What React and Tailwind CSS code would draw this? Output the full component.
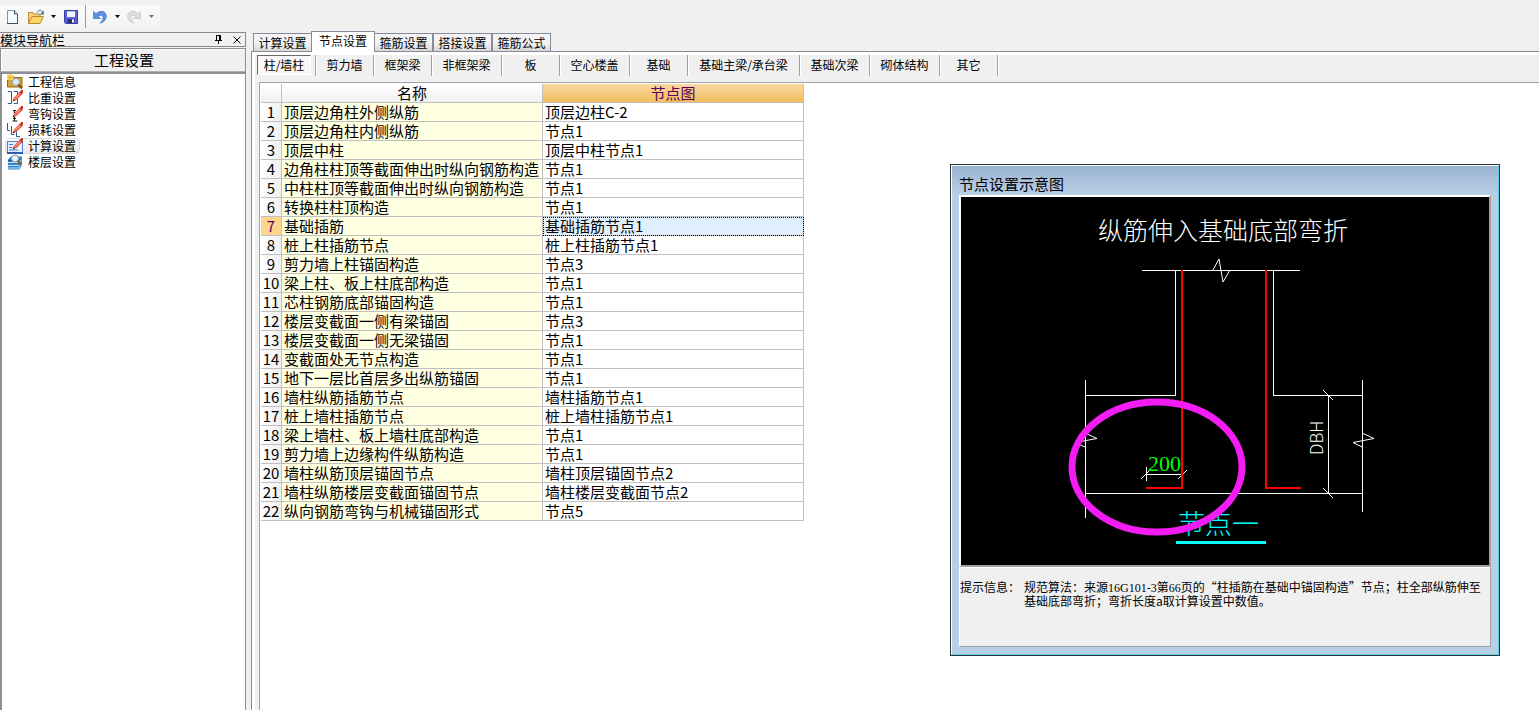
import React, { useState } from 'react';

const FONT = "font-['Noto_Sans_CJK_SC',sans-serif]";

const NAV_ITEMS = ['工程信息', '比重设置', '弯钩设置', '损耗设置', '计算设置', '楼层设置'];

const TABS = ['计算设置', '节点设置', '箍筋设置', '搭接设置', '箍筋公式'];

const MEMBERS = [
  { name: '柱/墙柱', width: 'w-[59px]' },
  { name: '剪力墙', width: 'w-[58px]' },
  { name: '框架梁', width: 'w-[58px]' },
  { name: '非框架梁', width: 'w-[70px]' },
  { name: '板', width: 'w-[58px]' },
  { name: '空心楼盖', width: 'w-[70px]' },
  { name: '基础', width: 'w-[58px]' },
  { name: '基础主梁/承台梁', width: 'w-[112px]' },
  { name: '基础次梁', width: 'w-[70px]' },
  { name: '砌体结构', width: 'w-[70px]' },
  { name: '其它', width: 'w-[58px]' },
];

const ROWS = [
  ['顶层边角柱外侧纵筋', '顶层边柱C-2'],
  ['顶层边角柱内侧纵筋', '节点1'],
  ['顶层中柱', '顶层中柱节点1'],
  ['边角柱柱顶等截面伸出时纵向钢筋构造', '节点1'],
  ['中柱柱顶等截面伸出时纵向钢筋构造', '节点1'],
  ['转换柱柱顶构造', '节点1'],
  ['基础插筋', '基础插筋节点1'],
  ['桩上柱插筋节点', '桩上柱插筋节点1'],
  ['剪力墙上柱锚固构造', '节点3'],
  ['梁上柱、板上柱底部构造', '节点1'],
  ['芯柱钢筋底部锚固构造', '节点1'],
  ['楼层变截面一侧有梁锚固', '节点3'],
  ['楼层变截面一侧无梁锚固', '节点1'],
  ['变截面处无节点构造', '节点1'],
  ['地下一层比首层多出纵筋锚固', '节点1'],
  ['墙柱纵筋插筋节点', '墙柱插筋节点1'],
  ['桩上墙柱插筋节点', '桩上墙柱插筋节点1'],
  ['梁上墙柱、板上墙柱底部构造', '节点1'],
  ['剪力墙上边缘构件纵筋构造', '节点1'],
  ['墙柱纵筋顶层锚固节点', '墙柱顶层锚固节点2'],
  ['墙柱纵筋楼层变截面锚固节点', '墙柱楼层变截面节点2'],
  ['纵向钢筋弯钩与机械锚固形式', '节点5'],
];

function Pencil() {
  return (
    <>
      <path d="M6 11 7 7.500 12.500 2 15 4.500 9.500 10Z" fill="#f0604a" />
      <path d="M12 2.500 14.500 0H16v2.500L14.500 5Z" fill="#c8321e" />
      <path d="M8 8.500 13.500 3" stroke="#ffb09c" />
      <path d="M5.500 11.500 6.500 9 8 10.500Z" fill="#3a2a1a" />
    </>
  );
}

function NavIcon({ index }) {
  const art = [
    <>
      <path d="M.5 2.500h6l1 1h7.500v9.500H.5z" fill="#d9a437" stroke="#8f6a1c" />
      <path d="M0 0h6v6H0z" fill="#fff0a0" />
      <path d="M3 0v7M0 3.500h7M.5 1l5 5M5.500 1l-5 5" stroke="#e6b818" />
      <circle cx="9" cy="8" r="3.500" fill="#d8ecff" stroke="#8fa2b8" />
      <path d="m11.500 10.500 3.500 4" stroke="#8a4a10" strokeWidth="2" />
    </>,
    <>
      <path d="M1 2V1.500h3.500v12H1V13M7 2V1.500h3.500v5M7 13v.5h3.500V9" fill="none" stroke="#2d5aa0" />
      <Pencil />
    </>,
    <>
      <path d="M6 4.500h3M7.500 4.500V15M5.500 15h5M6 12.500h3" stroke="#1a1a1a" fill="none" />
      <Pencil />
    </>,
    <>
      <path d="M.5 1v7.500H3M4.500 4v8.500H7.500M9.500 8v6.500H13" fill="none" stroke="#2d5aa0" />
      <Pencil />
    </>,
    <>
      <rect x=".5" y="3.500" width="15" height="11" fill="#e3efff" stroke="#5583cc" />
      <path d="M0 15h16" stroke="#2d5cae" strokeWidth="2" />
      <path d="M2 6.500h4M2 9.500h3M2 12h9" stroke="#3f78d8" />
      <Pencil />
    </>,
    <>
      <path d="M1 5.500 4 2.500h11v9.500l-3 3.500H1z" fill="#2d83c6" />
      <path d="M0 8.500h12l3-3M0 11.500h12l3-3M0 14h12l3-3" fill="none" stroke="#c5e6fc" />
      <path d="M1 6.500h5" stroke="#1c5c98" />
      <circle cx="8" cy="4.500" r="3.500" fill="#e9f2fb" stroke="#8797a8" />
      <path d="m10.500 7 4 3.500" stroke="#8a5a2a" strokeWidth="2" />
    </>,
  ];
  return (
    <svg viewBox="0 0 16 16" className="h-4 w-4 shrink-0" aria-hidden="true">
      {art[index]}
    </svg>
  );
}

function DropArrow({ color }) {
  return (
    <svg viewBox="0 0 5 3" className="h-[3px] w-[5px]" aria-hidden="true">
      <path d="M0 0h5L2.500 3z" fill={color} />
    </svg>
  );
}

function Toolbar() {
  return (
    <div className="h-8 pt-[5px]">
      <div className="flex h-[23px] w-[160px] items-center rounded-sm bg-gradient-to-b from-[#fafafa] to-[#f3f3f3] pl-[5px]">
        <button aria-label="新建">
          <svg viewBox="0 0 16 16" className="h-4 w-4">
            <path d="M2.500 1.500h7l3 3.500v9.500h-10z" fill="#f6faff" stroke="#7d97b3" />
            <path d="M2 14.500h11M12.500 5v10" stroke="#3d526b" />
            <path d="M9.500 1.500V5h3" fill="#cfe0f2" stroke="#3d526b" />
          </svg>
        </button>
        <button aria-label="打开" className="ml-[7px]">
          <svg viewBox="0 0 16 16" className="h-4 w-4">
            <path d="M.5 14V3.500h4.500l1 1.500h6V8" fill="#f6d27c" stroke="#b98a34" />
            <path d="M.5 14.500 4 7.500h11.500l-3.500 7z" fill="#fbd468" stroke="#b98a34" />
            <path d="M9 3.500c1-2.500 4-3 5.500-.5" fill="none" stroke="#4a6c94" />
            <path d="M15.800 1.500v4h-4z" fill="#4a6c94" />
          </svg>
        </button>
        <button aria-label="打开选项" className="ml-[7px]">
          <DropArrow color="#000" />
        </button>
        <button aria-label="保存" className="ml-[7px]">
          <svg viewBox="0 0 16 16" className="h-4 w-4">
            <path d="M1.500 1.500h13v13h-12l-1-1z" fill="#5a62d6" stroke="#3a3fa8" />
            <path d="M4 2h8v6H4z" fill="#f0f3ff" />
            <path d="M4 2h8v1H4z" fill="#b9c4f0" />
            <path d="M4.500 10h7v4h-7z" fill="#2a2f6c" />
            <path d="M9 10.500h2v3H9z" fill="#fff" />
          </svg>
        </button>
        <span className="ml-1.5 h-[23px] border-l border-[#9a9a9a]" />
        <button aria-label="撤销" className="ml-[6px]">
          <svg viewBox="0 0 16 16" className="h-4 w-4">
            <path d="M1.500 2.500v7h7L6.300 7.400c2.200-2 5-1 4.900 1.300-.1 2-1.500 3.500-3.200 5.500 3.800-.9 6.300-3.700 6.300-7C14.300 2 8 .5 4 4.800z" fill="#5a92e4" stroke="#2a62bc" strokeWidth=".6" />
          </svg>
        </button>
        <button aria-label="撤销选项" className="ml-[7px]">
          <DropArrow color="#000" />
        </button>
        <button aria-label="恢复" className="ml-1.5">
          <svg viewBox="0 0 16 16" className="h-4 w-4">
            <path d="M14.500 2.500v7h-7l2.200-2.100C7.500 5.400 4.700 6.400 4.800 8.700c.1 2 1.500 3.500 3.200 5.500-3.800-.9-6.300-3.700-6.300-7C1.700 2 8 .5 12 4.800z" fill="#dedede" stroke="#bcbcbc" strokeWidth=".6" />
          </svg>
        </button>
        <button aria-label="恢复选项" className="ml-[7px]">
          <DropArrow color="#777" />
        </button>
      </div>
    </div>
  );
}

function Sidebar() {
  const [active, setActive] = useState(4);
  return (
    <aside className="flex w-[246px] shrink-0 flex-col">
      <div className="flex h-[15px] items-center border border-l-0 border-[#8a8a8a]">
        <span className="flex-1 text-[13px] leading-3">模块导航栏</span>
        <button aria-label="固定" className="mr-2.5">
          <svg viewBox="0 0 9 9" className="h-[9px] w-[9px]" shapeRendering="crispEdges">
            <path d="M2.500 0v6M2 .5h4M1 5.500h7M4.500 6v3" fill="none" stroke="#000" />
            <path d="M5 0h2v6H5z" />
          </svg>
        </button>
        <button aria-label="关闭" className="mr-1">
          <svg viewBox="0 0 8 8" className="h-2 w-2">
            <path d="m.5.5 7 7m0-7-7 7" stroke="#000" />
          </svg>
        </button>
      </div>
      <h2 className="mt-px flex h-6 items-center justify-center border border-[#8c8c8c] border-b-[#b0b0b0] pl-0.5 text-[15px] leading-5 shadow-[inset_1px_1px_0_#fff]">
        工程设置
      </h2>
      <ul className="flex-1 border-2 border-r-[1px] border-b-0 border-[#8c8f94] bg-white pl-[3px]">
        {NAV_ITEMS.map((name, i) => (
          <li key={name}>
            <button
              onClick={() => setActive(i)}
              className={`flex h-4 w-[75px] items-center gap-[5px] rounded-sm border pl-px text-[12px] leading-3 whitespace-nowrap ${
                i === active
                  ? 'border-[#dcdcdc] bg-gradient-to-b from-[#fafafa] to-[#e9e9e9]'
                  : 'border-transparent'
              }`}
            >
              <NavIcon index={i} />
              {name}
            </button>
          </li>
        ))}
      </ul>
    </aside>
  );
}

function NodeTable() {
  const [selected, setSelected] = useState(6);
  const head = 'h-[19px] border-r border-b border-[#c0c0c0] p-0 text-center font-normal';
  return (
    <table className="table-fixed border-separate border-spacing-0 text-[15px] leading-[18px]">
      <thead>
        <tr>
          <th className={`${head} w-[21px] bg-gradient-to-b from-white to-[#f0f0f0]`} />
          <th className={`${head} w-[261px] bg-gradient-to-b from-white to-[#f0f0f0]`}>名称</th>
          <th className={`${head} w-[261px] bg-gradient-to-b from-[#f8d8a0] to-[#f2bd5c] text-[#5a005a]`}>
            节点图
          </th>
        </tr>
      </thead>
      <tbody>
        {ROWS.map(([name, node], i) => (
          <tr key={name} onClick={() => setSelected(i)}>
            <td
              className={`h-[19px] border-r border-b border-[#c0c0c0] p-0 text-center ${
                i === selected ? 'bg-[#ffd48c] text-[#5a005a]' : 'bg-gradient-to-r from-white to-[#f0f0f0]'
              }`}
            >
              {i + 1}
            </td>
            <td className="border-r border-b border-[#c0c0c0] bg-[#ffffe1] p-0 pl-0.5 whitespace-nowrap">{name}</td>
            <td
              className={`border-r border-b border-[#c0c0c0] p-0 pl-0.5 whitespace-nowrap ${
                i === selected ? 'bg-[#e0f0ff] outline-1 -outline-offset-1 outline-dotted outline-black' : ''
              }`}
            >
              {node}
            </td>
          </tr>
        ))}
      </tbody>
    </table>
  );
}

function NodeDrawing() {
  return (
    <svg viewBox="0 0 528 368" className="block w-full bg-black" role="img" aria-label="纵筋伸入基础底部弯折">
      <text x="137" y="43" fill="#fff" className="text-[25px] font-light">
        纵筋伸入基础底部弯折
      </text>

      {/* outline of the column and the slab */}
      <g fill="none" stroke="#fff" shapeRendering="crispEdges">
        <path d="M181 73.500H339" />
        <path d="M214.500 73V198.500H125M312.500 73V198.500H401" />
        <path d="M124.500 183V321M401.500 183V315M125 296.500H401" />
        <path d="M367.500 198V296M185.500 270V284M185 277.500H221" />
      </g>
      <g fill="none" stroke="#fff">
        <path d="M252 73 258 62 262 85 269 73" />
        <path d="M124 236 136 241.500 114 245.500 124 250M401 236 413 241.500 392 245.500 401 250" />
        <path d="m362 193 10 10M362 291l10 10M180 282l9-9M217 282l9-9" />
      </g>

      {/* bars bent at the bottom */}
      <path
        d="M221 73V291H185M305 73V291H340"
        fill="none"
        stroke="#f00"
        strokeWidth="2"
        shapeRendering="crispEdges"
      />

      <text x="187" y="274" fill="#0f0" className="font-['Liberation_Serif',serif] text-[22px]">
        200
      </text>
      <text transform="translate(362 258) rotate(-90)" fill="#fff" className="text-[17px] font-light">
        DBH
      </text>
      <text x="217" y="337" fill="#0ff" className="text-[27px] font-light">
        节点一
      </text>
      <path d="M215 345.500H305" stroke="#0ff" strokeWidth="3" shapeRendering="crispEdges" />
      <ellipse cx="196" cy="270" rx="85" ry="65" fill="none" stroke="#f31cf3" strokeWidth="7" />
    </svg>
  );
}

function NodeDialog() {
  return (
    <section className="absolute top-[164px] right-[39px] w-[550px] border border-[#2f3438] bg-[#b9cfe8] text-black">
      <div className="border border-white border-r-[#5cd0ea] border-b-[#5cd0ea] bg-gradient-to-b from-[#9ab4d0] to-[#b9cfe8] bg-[length:100%_30px] bg-no-repeat px-[7px] pb-[7px]">
        <h3 className="h-[29px] pt-2 text-[15px] leading-5">节点设置示意图</h3>
        <div className="border-2 border-white border-r-[#a0a0a0] border-b-[#a0a0a0]">
          <NodeDrawing />
        </div>
        <div className="flex h-20 border border-white border-r-[#a0a0a0] border-b-[#a0a0a0] bg-[#f0f0f0] pt-3 text-[12px] leading-[13px]">
          <span className="w-16 shrink-0">提示信息：</span>
          <p className="whitespace-nowrap">
            规范算法：来源<span className="font-['Liberation_Serif',serif] leading-none">16G101-3</span>第
            <span className="font-['Liberation_Serif',serif] leading-none">66</span>
            页的“柱插筋在基础中锚固构造”节点；柱全部纵筋伸至
            <br />
            基础底部弯折；弯折长度a取计算设置中数值。
          </p>
        </div>
      </div>
    </section>
  );
}

export default function App() {
  const [tab, setTab] = useState(1);
  const [member, setMember] = useState(0);

  return (
    <div className={`relative flex h-screen flex-col overflow-hidden bg-[#f0f0f0] text-black ${FONT}`}>
      <Toolbar />
      <div className="flex min-h-0 flex-1">
        <Sidebar />
        <main className="ml-[5px] flex min-w-0 flex-1 flex-col">
          <div className="-mt-px flex h-5 items-end pl-0.5" role="tablist">
            {TABS.map((name, i) => (
              <button
                key={name}
                role="tab"
                aria-selected={i === tab}
                onClick={() => setTab(i)}
                className={`border border-b-0 border-[#868a9a] text-[12px] leading-4 whitespace-nowrap ${
                  i === tab
                    ? 'z-10 -mx-px -mb-px h-[21px] w-16 bg-white pb-0.5'
                    : 'h-[18px] w-[59px] bg-gradient-to-b from-[#f4f4f4] from-50% to-[#d8d8d8]'
                }`}
              >
                {name}
              </button>
            ))}
          </div>
          <div className="flex min-h-0 flex-1 flex-col border-t border-l border-[#868a9a] bg-white pt-[3px] pl-[3px]">
            <div className="flex min-h-0 flex-1 flex-col bg-[#f0f0f0] pl-0.5">
              <div className="flex h-[27px] items-start">
                {MEMBERS.map(({ name, width }, i) => (
                  <div key={name} className={`${width} h-[21px] shrink-0 border-r border-[#a0a0a0] pr-1 shadow-[1px_0_0_#fff]`}>
                    <button
                      onClick={() => setMember(i)}
                      className={`block h-5 w-full text-[12px] leading-[18px] whitespace-nowrap ${
                        i === member
                          ? 'border border-t-[#696969] border-l-[#696969] border-r-white border-b-white bg-[#f8f8f8]'
                          : 'pl-1'
                      }`}
                    >
                      {name}
                    </button>
                  </div>
                ))}
              </div>
              <div className="ml-0.5 min-h-0 flex-1 border-t border-l border-[#a0a0a0] bg-white pt-px pl-px">
                <NodeTable />
              </div>
            </div>
          </div>
        </main>
      </div>
      <NodeDialog />
    </div>
  );
}
